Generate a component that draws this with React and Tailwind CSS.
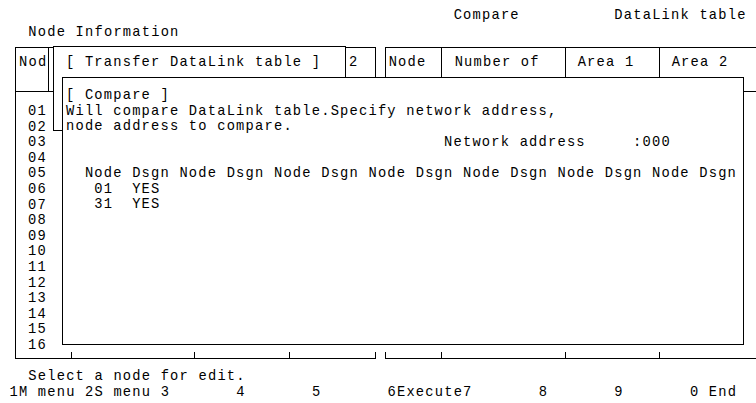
const title = " ".repeat(48) + "Compare" + " ".repeat(10) + "DataLink table";
const footer = " 1M menu 2S menu 3       4       5       6Execute7       8       9       0 End";
const rowNums = Array.from({ length: 16 }, (_, i) => String(i + 1).padStart(2, "0"));

const dialogLines = [
  "[ Compare ]",
  "Will compare DataLink table.Specify network address,",
  "node address to compare.",
  " ".repeat(40) + "Network address     :000",
  "",
  "  " + Array(7).fill("Node Dsgn").join(" "),
  "   01  YES",
  "   31  YES",
];

function Column({ width, label, pad }) {
  return (
    <div className={`flex flex-col border-r border-black ${width}`}>
      <div className={`h-[44px] border-b border-black pt-[7px] whitespace-pre ${pad}`}>{label}</div>
      <div className="flex-1" />
    </div>
  );
}

function LeftTable() {
  return (
    <div className="ml-[15px] flex w-[369px] border border-black">
      <div className="flex w-[33px] flex-col">
        <div className="h-[44px] border-b border-r border-black pl-[3px] pt-[7px]">Nod</div>
        <div className="flex flex-col pl-[12px] pt-[12px]">
          {rowNums.map((n) => (
            <div key={n} className="h-[15.6px]">
              {n}
            </div>
          ))}
        </div>
      </div>
      <Column width="w-[23px]" />
      <Column width="w-[123px]" />
      <Column width="w-[95px]" />
      <div className="flex flex-1 flex-col">
        <div className="h-[44px] border-b border-black pl-[59px] pt-[7px]">2</div>
      </div>
    </div>
  );
}

function RightTable() {
  return (
    <div className="ml-[9px] flex w-[380px] border-y border-l border-black">
      <Column width="w-[56px]" label="Node" pad="pl-[3px]" />
      <Column width="w-[124px]" label="Number of" pad="pl-[13px]" />
      <Column width="w-[94px]" label="Area 1" pad="pl-[12px]" />
      <div className="flex flex-1 flex-col">
        <div className="h-[44px] border-b border-black pl-[12px] pt-[7px]">Area 2</div>
      </div>
    </div>
  );
}

export default function App() {
  return (
    <div className="relative h-[403px] w-[756px] overflow-hidden bg-white font-['Liberation_Mono',monospace] text-[13.75px] leading-[15.6px] tracking-[1.2px] text-black">
      <div className="h-[24px] pt-[8px] whitespace-pre">{title}</div>
      <div className="h-[23px] pt-[1px] whitespace-pre">   Node Information</div>

      <div className="relative flex h-[312px]">
        <LeftTable />
        <RightTable />

        {/* Transfer DataLink table window */}
        <div className="absolute left-[53px] top-[-1px] h-[85px] w-[293px] border border-black bg-white pl-[12px] pt-[8px] whitespace-pre">
          [ Transfer DataLink table ]
        </div>

        {/* Compare dialog */}
        <div className="absolute left-[62px] top-[30px] h-[268px] w-[682px] border border-black bg-white pl-[3px] pt-[10px] shadow-[0_7px_0_0_#fff]">
          {dialogLines.map((line, i) => (
            <div key={i} className="h-[15.6px] whitespace-pre">
              {line}
            </div>
          ))}
        </div>
      </div>

      <div className="mt-[10px] whitespace-pre">   Select a node for edit.</div>
      <div className="whitespace-pre">{footer}</div>
    </div>
  );
}
